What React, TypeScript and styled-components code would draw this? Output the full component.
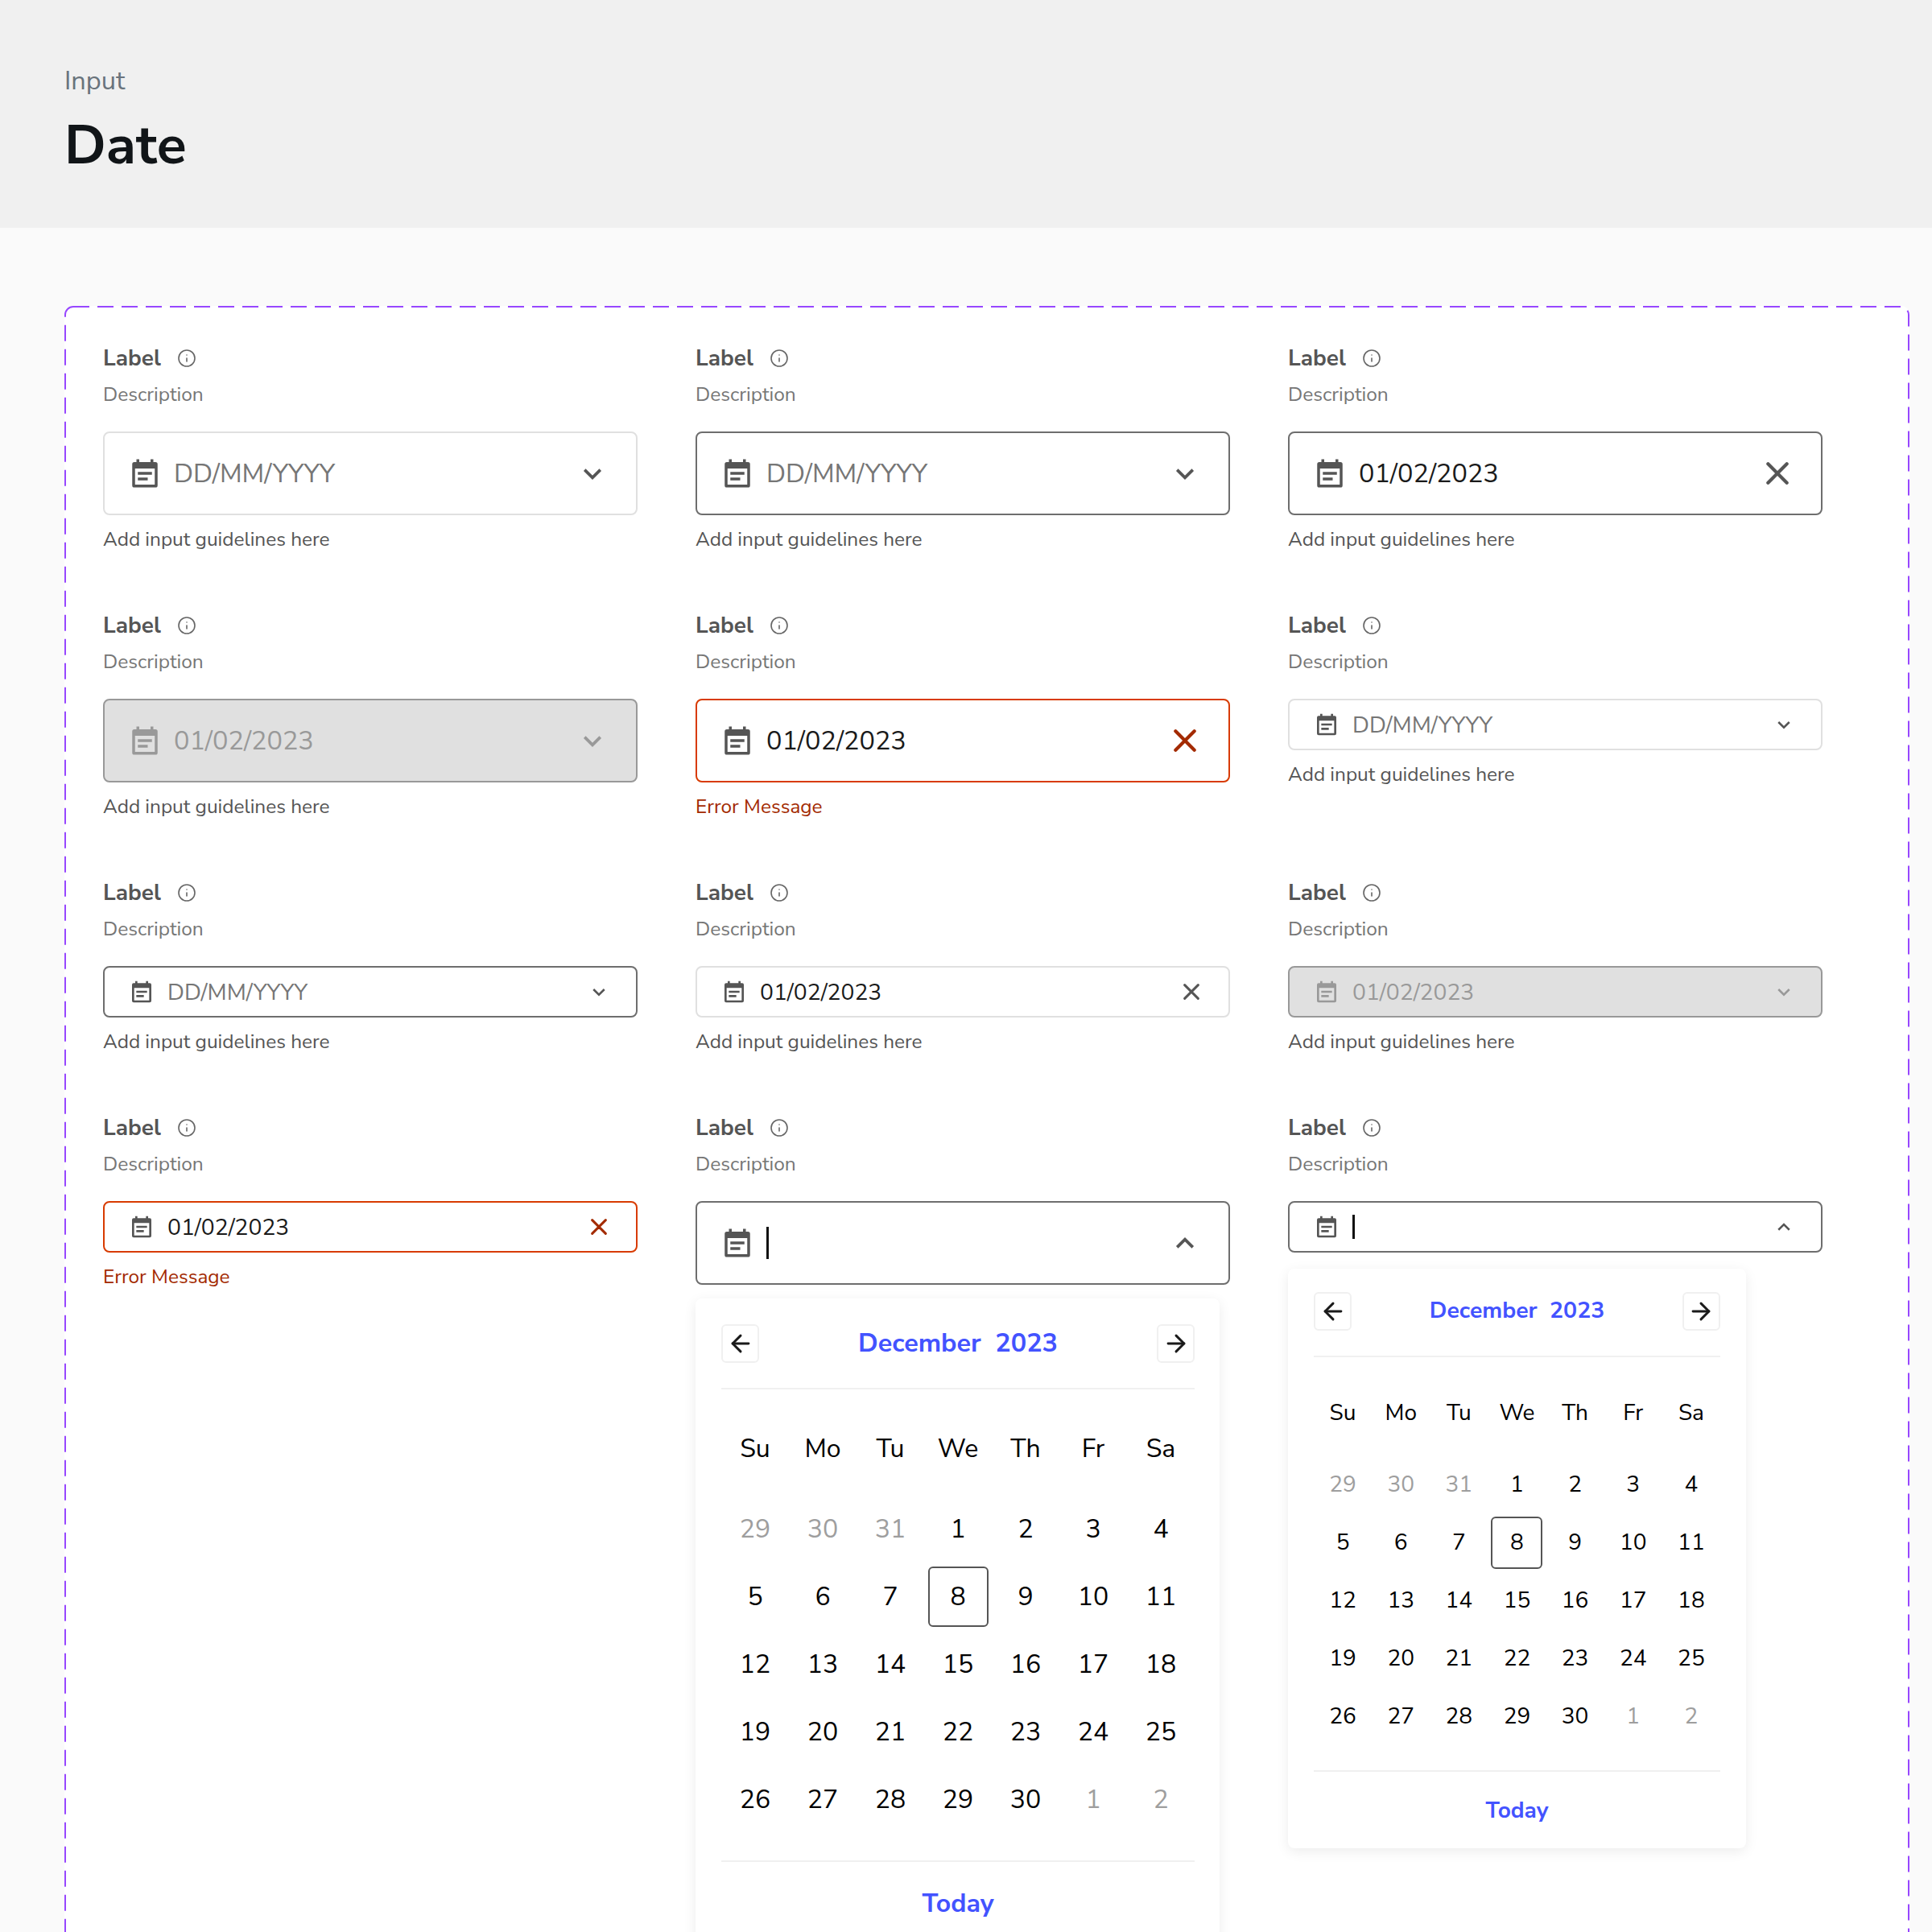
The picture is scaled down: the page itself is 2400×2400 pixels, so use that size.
import React from "react";
import styled, { createGlobalStyle, css } from "styled-components";
import { ArrowLeft, ArrowRight, Info } from "lucide-react";

type Tone = "idle" | "active" | "disabled" | "error";
type Size = "lg" | "sm";
type Trail = "down" | "up" | "close";

const FONT = `"Nunito Sans", Lato, "Noto Sans", sans-serif`;

const GlobalStyle = createGlobalStyle`
  html, body {
    margin: 0;
    padding: 0;
    background: #fafafa;
    font-family: ${FONT};
  }
  * { box-sizing: border-box; }
`;

function CalendarIcon({ size }: { size: number }) {
  return (
    <svg width={size} height={size} viewBox="0 0 24 24" fill="currentColor">
      <path
        fillRule="evenodd"
        d="M6 2h2v2h8V2h2v2h1.500A1.500 1.500 0 0 1 21 5.500v15a1.500 1.500 0 0 1-1.500 1.500h-15A1.500 1.500 0 0 1 3 20.500v-15A1.500 1.500 0 0 1 4.500 4H6V2zM5 8.500V20h14V8.500H5z"
      />
      <path d="M7 11h10v2H7zM7 15h7v2H7z" />
    </svg>
  );
}

function ChevronIcon({ size, up }: { size: number; up?: boolean }) {
  return (
    <svg width={size} height={size} viewBox="0 0 24 24" fill="none" stroke="currentColor" strokeWidth="3.4">
      <path d={up ? "M3 17 12 8l9 9" : "M3 8l9 9 9-9"} />
    </svg>
  );
}

function CloseIcon({ size }: { size: number }) {
  return (
    <svg width={size} height={size} viewBox="0 0 24 24" fill="none" stroke="currentColor" strokeWidth="3.6" strokeLinecap="round">
      <path d="M2 2l20 20M22 2 2 22" />
    </svg>
  );
}

interface FieldProps {
  size?: Size;
  tone?: Tone;
  value?: string;
  placeholder?: string;
  trail?: Trail;
  caret?: boolean;
  message?: string;
  children?: React.ReactNode;
}

function DateField({
  size = "lg",
  tone = "idle",
  value,
  placeholder,
  trail = "down",
  caret,
  message = "Add input guidelines here",
  children,
}: FieldProps) {
  const lg = size === "lg";
  return (
    <Field>
      <LabelRow>
        <Label>Label</Label>
        <InfoMark>
          <Info size={24} strokeWidth={1.6} />
        </InfoMark>
      </LabelRow>
      <Description>Description</Description>
      <InputBox $size={size} $tone={tone}>
        <LeadIcon $size={size} $tone={tone}>
          <CalendarIcon size={lg ? 42 : 32} />
        </LeadIcon>
        {caret && <Caret $size={size} />}
        {value && (
          <Value $size={size} $tone={tone}>
            {value}
          </Value>
        )}
        {placeholder && <Placeholder $size={size}>{placeholder}</Placeholder>}
        <TrailIcon $size={size} $tone={tone} $trail={trail}>
          {trail === "close" ? (
            <CloseIcon size={lg ? 28 : 20} />
          ) : (
            <ChevronIcon size={lg ? 26 : 18} up={trail === "up"} />
          )}
        </TrailIcon>
      </InputBox>
      {children ?? <Guide $error={tone === "error"}>{message}</Guide>}
    </Field>
  );
}

const WEEK = ["Su", "Mo", "Tu", "We", "Th", "Fr", "Sa"];
const DAYS: { n: number; muted?: boolean }[] = [
  { n: 29, muted: true },
  { n: 30, muted: true },
  { n: 31, muted: true },
  ...Array.from({ length: 30 }, (_, i) => ({ n: i + 1 })),
  { n: 1, muted: true },
  { n: 2, muted: true },
];

function Calendar({ size }: { size: Size }) {
  return (
    <Popup $size={size}>
      <CalHead $size={size}>
        <NavButton>
          <ArrowLeft size={34} strokeWidth={2.1} />
        </NavButton>
        <MonthTitle $size={size}>December&nbsp; 2023</MonthTitle>
        <NavButton>
          <ArrowRight size={34} strokeWidth={2.1} />
        </NavButton>
      </CalHead>
      <WeekRow $size={size}>
        {WEEK.map((d) => (
          <WeekCell key={d} $size={size}>
            {d}
          </WeekCell>
        ))}
      </WeekRow>
      <DayGrid $size={size}>
        {DAYS.map((d, i) => (
          <DayCell key={i} $size={size}>
            <DayMark $selected={!d.muted && d.n === 8} $muted={d.muted} $size={size}>
              {d.n}
            </DayMark>
          </DayCell>
        ))}
      </DayGrid>
      <CalFoot $size={size}>Today</CalFoot>
    </Popup>
  );
}

export default function App() {
  return (
    <Page>
      <GlobalStyle />
      <Header>
        <Crumb>Input</Crumb>
        <Title>Date</Title>
      </Header>
      <Main>
        <Panel>
          <DashFrame>
            <rect />
          </DashFrame>
          <Grid>
            <DateField placeholder="DD/MM/YYYY" />
            <DateField tone="active" placeholder="DD/MM/YYYY" />
            <DateField tone="active" value="01/02/2023" trail="close" />

            <DateField tone="disabled" value="01/02/2023" />
            <DateField tone="error" value="01/02/2023" trail="close" message="Error Message" />
            <DateField size="sm" placeholder="DD/MM/YYYY" />

            <DateField size="sm" tone="active" placeholder="DD/MM/YYYY" />
            <DateField size="sm" value="01/02/2023" trail="close" />
            <DateField size="sm" tone="disabled" value="01/02/2023" />

            <DateField size="sm" tone="error" value="01/02/2023" trail="close" message="Error Message" />
            <DateField tone="active" caret trail="up">
              <Calendar size="lg" />
            </DateField>
            <DateField size="sm" tone="active" caret trail="up">
              <Calendar size="sm" />
            </DateField>
          </Grid>
        </Panel>
      </Main>
    </Page>
  );
}

const Page = styled.div`
  width: 2400px;
  height: 2400px;
  overflow: hidden;
  background: #fafafa;
`;

const Header = styled.header`
  height: 283px;
  padding: 80px 80px 0;
  background: #f0f0f0;
`;

const Crumb = styled.div`
  font-size: 32.5px;
  line-height: 40px;
  color: #69737c;
`;

const Title = styled.h1`
  margin: 17px 0 0;
  font-size: 68px;
  line-height: 88px;
  font-weight: 700;
  color: #111518;
`;

const Main = styled.main`
  padding: 97px 28px 0 80px;
`;

const Panel = styled.section`
  position: relative;
  background: #fff;
  border-radius: 10px;
  padding: 46px 48px 90px;
`;

const DashFrame = styled.svg`
  position: absolute;
  inset: 0;
  width: 100%;
  height: 100%;
  pointer-events: none;

  rect {
    x: 1px;
    y: 1px;
    width: calc(100% - 2px);
    height: calc(100% - 2px);
    rx: 10px;
    fill: none;
    stroke: #9747ff;
    stroke-width: 2px;
    stroke-dasharray: 20 10;
  }
`;

const Grid = styled.div`
  display: grid;
  grid-template-columns: repeat(3, 664px);
  grid-template-rows: 260px 260px 220px auto;
  column-gap: 72px;
  row-gap: 72px;
  align-items: start;
`;

const Field = styled.div`
  display: flex;
  flex-direction: column;
`;

const LabelRow = styled.div`
  display: flex;
  align-items: center;
  gap: 20px;
  height: 38px;
`;

const Label = styled.span`
  font-size: 28px;
  font-weight: 700;
  color: #555;
`;

const InfoMark = styled.span`
  display: flex;
  color: #666;
`;

const Description = styled.div`
  margin-top: 8px;
  font-size: 24.5px;
  line-height: 36px;
  color: #767676;
`;

const toneBorder = {
  idle: "#e0e0e0",
  active: "#6e6e6e",
  disabled: "#999",
  error: "#d83b01",
};

const InputBox = styled.div<{ $size: Size; $tone: Tone }>`
  display: flex;
  align-items: center;
  margin-top: 28px;
  height: ${(p) => (p.$size === "lg" ? "104px" : "64px")};
  padding-left: ${(p) => (p.$size === "lg" ? "29px" : "30px")};
  border: 2px solid ${(p) => toneBorder[p.$tone]};
  border-radius: 8px;
  background: ${(p) => (p.$tone === "disabled" ? "#e0e0e0" : "#fff")};
`;

const LeadIcon = styled.span<{ $size: Size; $tone: Tone }>`
  display: flex;
  flex: none;
  margin-right: ${(p) => (p.$size === "lg" ? "15px" : "16px")};
  color: ${(p) => (p.$tone === "disabled" ? "#999" : "#555")};
`;

const textSize = css<{ $size: Size }>`
  font-size: ${(p) => (p.$size === "lg" ? "32.4px" : "28.2px")};
`;

const Value = styled.span<{ $size: Size; $tone: Tone }>`
  ${textSize}
  color: ${(p) => (p.$tone === "disabled" ? "#999" : "#1a1a1a")};
`;

const Placeholder = styled.span<{ $size: Size }>`
  ${textSize}
  color: #767676;
`;

const Caret = styled.span<{ $size: Size }>`
  width: 3px;
  height: ${(p) => (p.$size === "lg" ? "40px" : "30px")};
  background: #111;
`;

const TrailIcon = styled.span<{ $size: Size; $tone: Tone; $trail: Trail }>`
  display: flex;
  margin-left: auto;
  margin-right: ${(p) =>
    p.$trail === "close" ? (p.$size === "lg" ? "40px" : "36px") : p.$size === "lg" ? "41px" : "37px"};
  color: ${(p) => (p.$tone === "disabled" ? "#999" : p.$tone === "error" ? "#a32a00" : "#555")};
`;

const Guide = styled.div<{ $error?: boolean }>`
  margin-top: 12px;
  font-size: 24.4px;
  line-height: 36px;
  color: ${(p) => (p.$error ? "#a32900" : "#555")};
`;

const Popup = styled.div<{ $size: Size }>`
  margin-top: ${(p) => (p.$size === "lg" ? "17px" : "20px")};
  width: ${(p) => (p.$size === "lg" ? "651px" : "569px")};
  padding: ${(p) => (p.$size === "lg" ? "32px" : "29px")} ${(p) => (p.$size === "lg" ? "31px" : "32px")} 0 32px;
  background: #fff;
  border-radius: 8px;
  box-shadow: 0 4px 16px rgba(0, 0, 0, 0.08);
`;

const CalHead = styled.div<{ $size: Size }>`
  display: flex;
  align-items: center;
  justify-content: space-between;
  padding-bottom: 31px;
  border-bottom: 2px solid #f0f0f0;
`;

const NavButton = styled.span`
  display: flex;
  align-items: center;
  justify-content: center;
  width: 47px;
  height: 48px;
  border: 2px solid #f0f0f0;
  border-radius: 6px;
  color: #1a1a1a;
`;

const MonthTitle = styled.div<{ $size: Size }>`
  margin-top: -3px;
  font-size: ${(p) => (p.$size === "lg" ? "32.4px" : "28.4px")};
  font-weight: 700;
  color: #4353ff;
`;

const WeekRow = styled.div<{ $size: Size }>`
  display: grid;
  grid-template-columns: repeat(7, 1fr);
  margin-top: ${(p) => (p.$size === "lg" ? "31px" : "33px")};
  margin-bottom: ${(p) => (p.$size === "lg" ? "16px" : "17px")};
`;

const WeekCell = styled.div<{ $size: Size }>`
  display: flex;
  align-items: center;
  justify-content: center;
  height: ${(p) => (p.$size === "lg" ? "84px" : "72px")};
  font-size: ${(p) => (p.$size === "lg" ? "32px" : "28px")};
  color: #000;
`;

const DayGrid = styled.div<{ $size: Size }>`
  display: grid;
  grid-template-columns: repeat(7, 1fr);
  grid-auto-rows: ${(p) => (p.$size === "lg" ? "84px" : "72px")};
`;

const DayCell = styled.div<{ $size: Size }>`
  display: flex;
  align-items: center;
  justify-content: center;
  font-size: ${(p) => (p.$size === "lg" ? "32px" : "28px")};
`;

const DayMark = styled.span<{ $selected?: boolean; $muted?: boolean; $size: Size }>`
  display: flex;
  align-items: center;
  justify-content: center;
  width: ${(p) => (p.$size === "lg" ? "75px" : "64px")};
  height: ${(p) => (p.$size === "lg" ? "75px" : "65px")};
  border-radius: 6px;
  border: 2px solid ${(p) => (p.$selected ? "#555" : "transparent")};
  color: ${(p) => (p.$muted ? "#9e9e9e" : "#000")};
`;

const CalFoot = styled.div<{ $size: Size }>`
  margin-top: ${(p) => (p.$size === "lg" ? "34px" : "31px")};
  border-top: 2px solid #f0f0f0;
  text-align: center;
  height: ${(p) => (p.$size === "lg" ? "104px" : "97px")};
  line-height: ${(p) => (p.$size === "lg" ? "104px" : "97px")};
  font-size: ${(p) => (p.$size === "lg" ? "32px" : "28px")};
  font-weight: 700;
  color: #4353ff;
`;
